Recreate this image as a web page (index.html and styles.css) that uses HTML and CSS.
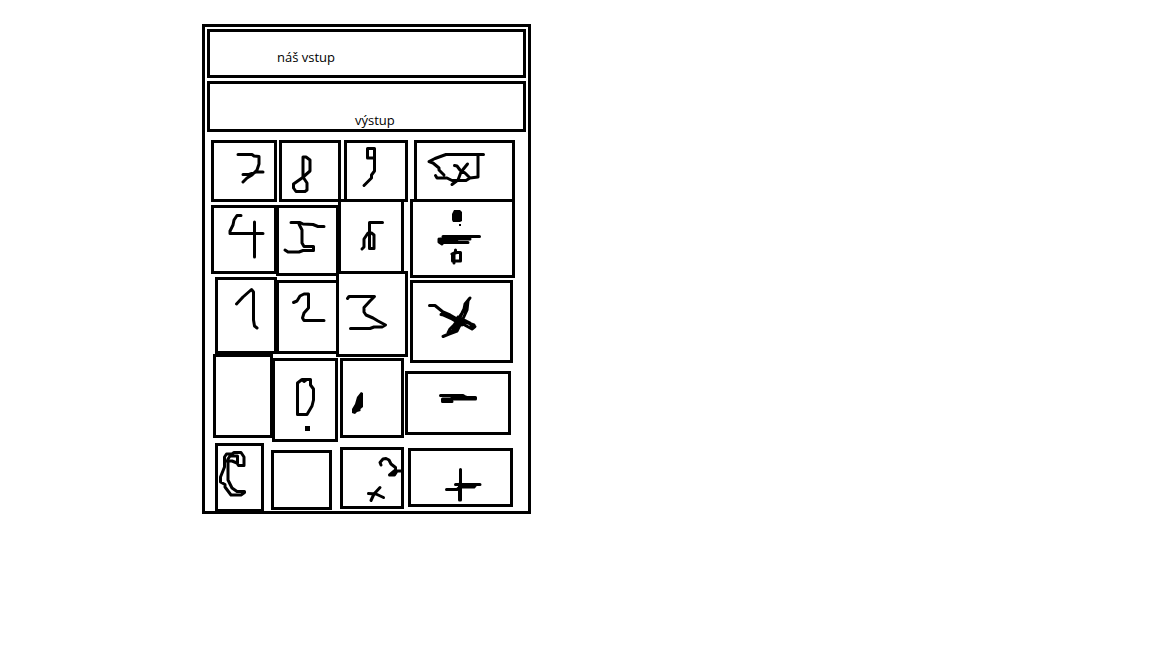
FILE: index.html
```html
<!DOCTYPE html>
<html lang="cs">
<head>
<meta charset="utf-8">
<meta name="viewport" content="width=device-width, initial-scale=1">
<title>Kalkulačka</title>
<link rel="stylesheet" href="styles.css">
</head>
<body>
<main class="calculator">
  <input class="display display-input" type="text" value="náš vstup" aria-label="Vstup">
  <output class="display display-output">výstup</output>

  <div class="keypad">
    <div class="column">
      <button class="key key-seven" type="button" aria-label="7">
        <svg viewBox="214 143 60 56"><path d="M238 154.500H252L254 156L259 156.500V164L257 170L252 175L247 178L243 182M243 174.500H249L256 172H263"/></svg>
      </button>
      <button class="key key-four" type="button" aria-label="4">
        <svg viewBox="214 208 60 63"><path d="M241 215.500H237L234 220L233 225L230 231V233.500H263M254.500 222V257"/></svg>
      </button>
      <button class="key key-one" type="button" aria-label="1">
        <svg viewBox="218 280 56 71"><path d="M236.500 304L243 297L251.500 289.500L253.500 292V320L254.500 326L257 328"/></svg>
      </button>
      <button class="key key-blank" type="button" aria-label="Prázdné"></button>
      <button class="key key-clear" type="button" aria-label="C">
        <svg viewBox="218 446 43 63"><path d="M244 465.500H238.500L237 463L232 461H226M244 465.500V457L241 452.500H234L232 454H226.500L224.500 457V467L220.500 477V482L225 484.500V487L231 495H241L244.500 492.500V491.500H237L232 488L228 480V459L230 456H237.500V463"/></svg>
      </button>
    </div>

    <div class="column">
      <button class="key key-eight" type="button" aria-label="8">
        <svg viewBox="282 143 56 56"><path d="M303 157V177L307 183V190L305 191.500H296L293.500 188V184L302 178L310 171V160L306 157Z"/></svg>
      </button>
      <button class="key key-five" type="button" aria-label="5">
        <svg viewBox="279 208 57 65"><path d="M291 222.500H300L303 224L313 224.500L318 226.500H324M299 224L302 230V243L304 246.500H313.500V250.500H303L299 252H288L285 250"/></svg>
      </button>
      <button class="key key-two" type="button" aria-label="2">
        <svg viewBox="279 283 57 68"><path d="M293.500 302.500L297 301L300 296L304 294H308.500V308L304 313L302.500 318L304 320.500H324"/></svg>
      </button>
      <button class="key key-zero" type="button" aria-label="0">
        <svg viewBox="275 361 60 78"><path d="M302 379.500L297.500 383V414.500H307L312 406L313.500 400V389L310.500 385V379.500H302L304 381.500L306 380"/><path class="solid" d="M305 426h5v5h-5z"/></svg>
      </button>
      <button class="key key-spare" type="button" aria-label="Prázdné"></button>
    </div>

    <div class="column">
      <button class="key key-nine" type="button" aria-label="9">
        <svg viewBox="347 143 58 56"><path d="M374.500 158H367.500V148.500H374.500V171L371.500 175V178L364 185.500"/></svg>
      </button>
      <button class="key key-six" type="button" aria-label="6">
        <svg viewBox="341 202 60 69"><path d="M382.500 222.500H369.500V248.500H374V235L371.500 233H368L364 239V247L362 249"/></svg>
      </button>
      <button class="key key-three" type="button" aria-label="3">
        <svg viewBox="339 274 66 80"><path d="M347.500 298.500L349 296.500H374.500L370 301L364 307.500V312L366 315L373 318L378 321L385.500 325L382 327H374L370 328.500H350.500"/></svg>
      </button>
      <button class="key key-comma" type="button" aria-label="Desetinná čárka">
        <svg viewBox="343 361 58 74"><path class="solid" d="M361 392L363 393V407L360.500 409V411L357 412L355 414L352 413V409L355 404L357 397Z"/></svg>
      </button>
      <button class="key key-square" type="button" aria-label="Druhá mocnina">
        <svg viewBox="343 450 58 56"><path d="M381 465L380 462.500L383 459L386 458.500L389 460L391 464L395.500 467.500V470L389.500 475H394.500L397 471H401M368.500 493.500L376 494L383.500 497.500M380 487.500L374 494L371 500.500"/></svg>
      </button>
    </div>

    <div class="column">
      <button class="key key-backspace" type="button" aria-label="Smazat">
        <svg viewBox="417 143 95 56"><path d="M483.500 154.500H446L435 158.500L429 161.500L433 163L439 168V170L444 175M435.500 175.500L437 178H447L452 180.500H466L470 178L478 177V155M454.500 165.500L457 166L460 170L465 173L470 178M467.500 164L461 172L458 180L452 184.500"/></svg>
      </button>
      <button class="key key-divide" type="button" aria-label="Děleno">
        <svg viewBox="413 202 99 73"><path class="solid" d="M454 210H460L462 212V221L460 222H453L452 220V214Z"/><path class="solid" d="M459 224h2v2h-2z"/><path d="M443 236.500H479.500M440 239H470M440 241.500H457M442 242.500H468M439 239V242L442 244M455.500 250V253M452 254L455 252.500H460.500V261H452.500V254M454 254V263"/></svg>
      </button>
      <button class="key key-multiply" type="button" aria-label="Krát">
        <svg viewBox="413 283 97 77"><path d="M429.500 305.500H435L443 312L450 315L457 319L466 321L475 326.500L472 329L461 323L449 316L441 314.500M470 298L465 304L464 309L459 320L455 329L449 334L443 336.500M468 301L467 310L462 321L457 331L449 334M442 314L474 325M456 323L450 329L448 333M469 299L462 313L452 328M458 317L470 323M443 315L452 319L462 325M468 322L472 326M466 303L465 312"/></svg>
      </button>
      <button class="key key-minus" type="button" aria-label="Minus">
        <svg viewBox="408 374 100 58"><path d="M440.500 395.500H463L466 397.500H475.500V399H442.500V401.500H452M452 397H466"/></svg>
      </button>
      <button class="key key-plus" type="button" aria-label="Plus">
        <svg viewBox="411 451 99 53"><path d="M460.500 469.500V500M459.500 484V500M446.500 489.500H457L460 487H474L476 484.500H480M455.500 484.500H480"/></svg>
      </button>
    </div>
  </div>
</main>
</body>
</html>
```
FILE: styles.css
```css
* {
  box-sizing: border-box;
}

body {
  margin: 24px 0 24px 202px;
  background: #fff;
  color: #000;
  font: 13px/16px "Open Sans", "Noto Sans", sans-serif;
}

.calculator {
  display: flex;
  flex-direction: column;
  gap: 3px;
  width: fit-content;
  padding: 2px 2px 0;
  border: 3px solid #000;
}

.display {
  display: block;
  width: 100%;
  border: 3px solid #000;
  border-radius: 0;
  background: #fff;
  color: inherit;
  font: inherit;
}

.display-input {
  height: 49px;
  padding: 7px 0 0 67px;
}

.display-output {
  height: 51px;
  padding: 28px 0 0 145px;
}

.keypad {
  display: grid;
  grid-template-columns: 60px 65px 69px 110px;
  padding: 5px 11px 0 4px;
}

.column {
  display: flex;
  flex-direction: column;
}

.key {
  flex: none;
  padding: 0;
  border: 3px solid #000;
  border-radius: 0;
  background: transparent;
  color: inherit;
  cursor: pointer;
}

.key svg {
  display: block;
  width: 100%;
  height: 100%;
  overflow: visible;
  fill: none;
  stroke: currentColor;
  stroke-width: 3px;
  stroke-linecap: round;
  stroke-linejoin: round;
}

.key .solid {
  fill: currentColor;
  stroke: none;
}

/* Every key has its own hand-drawn size. */
.key-seven { width: 66px; height: 62px; }
.key-four { width: 66px; height: 69px; margin: 3px 0 0; }
.key-one { width: 62px; height: 77px; margin: 3px 0 0 4px; }
.key-blank { width: 60px; height: 84px; margin: 0 0 0 2px; }
.key-clear { width: 49px; height: 69px; margin: 5px 0 -1px 4px; }

.key-eight { width: 62px; height: 62px; margin: 0 0 0 8px; }
.key-five { width: 63px; height: 71px; margin: 3px 0 0 5px; }
.key-two { width: 63px; height: 74px; margin: 4px 0 0 5px; }
.key-zero { width: 66px; height: 84px; margin: 4px 0 0 1px; }
.key-spare { width: 61px; height: 60px; margin: 8px 0 0; }

.key-nine { width: 64px; height: 62px; margin: 0 0 0 8px; }
.key-six { width: 66px; height: 75px; margin: -3px 0 0 2px; }
.key-three { width: 72px; height: 86px; margin: -3px 0 0; }
.key-comma { width: 64px; height: 80px; margin: 1px 0 0 4px; }
.key-square { width: 64px; height: 62px; margin: 9px 0 0 4px; }

.key-backspace { width: 101px; height: 62px; margin: 0 0 0 9px; }
.key-divide { width: 105px; height: 79px; margin: -3px 0 0 5px; }
.key-multiply { width: 103px; height: 83px; margin: 2px 0 0 5px; }
.key-minus { width: 106px; height: 64px; margin: 8px 0 0; }
.key-plus { width: 105px; height: 59px; margin: 13px 0 0 3px; }
```
